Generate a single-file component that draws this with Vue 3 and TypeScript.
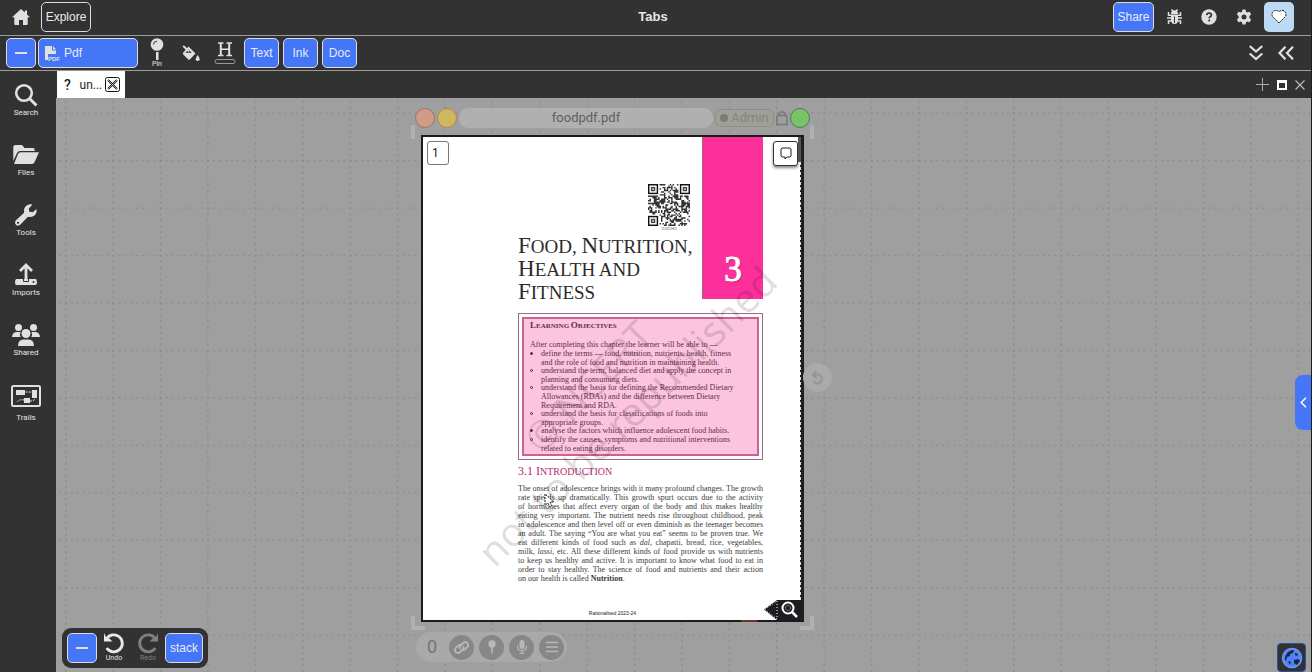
<script setup lang="ts">
interface Objective { lines: string[]; solid: boolean }

const objectives: Objective[] = [
  { solid: true, lines: ['define the terms — food, nutrition, nutrients, health, fitness', 'and the role of food and nutrition in maintaining health.'] },
  { solid: false, lines: ['understand the term, balanced diet and apply the concept in', 'planning and consuming diets.'] },
  { solid: false, lines: ['understand the basis for defining the Recommended Dietary', 'Allowances (RDAs) and the difference between Dietary', 'Requirement and RDA.'] },
  { solid: false, lines: ['understand the basis for classifications of foods into', 'appropriate groups.'] },
  { solid: true, lines: ['analyse the factors which influence adolescent food habits.'] },
  { solid: false, lines: ['identify the causes, symptoms and nutritional interventions', 'related to eating disorders.'] },
]

const QR_SIZE = 29

function inFinder(x: number, y: number): boolean {
  return (x < 8 && y < 8) || (x > QR_SIZE - 9 && y < 8) || (x < 8 && y > QR_SIZE - 9)
}

function buildQr(): string {
  let seed = 71
  let d = ''
  for (let y = 0; y < QR_SIZE; y++) {
    for (let x = 0; x < QR_SIZE; x++) {
      seed = (seed * 1103515245 + 12345) % 2147483648
      if (!inFinder(x, y) && (seed >> 12) % 100 < 52) d += `M${x} ${y}h1v1h-1z`
    }
  }
  return d
}

const qrPath = buildQr()
const finders = [[0, 0], [22, 0], [0, 22]]
</script>

<template>
  <div class="app">
    <header class="topbar">
      <div class="group">
        <button class="icon-btn home" aria-label="Home">
          <svg width="18" height="16" viewBox="0 0 18 16"><path d="M9 0 0 8.200h2.300V15q0 1 1 1h3.700v-5h4v5h3.700q1 0 1-1V8.200H18L15 5.400V1.400h-2.200v2z" fill="#e0e0e0" /></svg>
        </button>
        <button class="btn outline">Explore</button>
      </div>
      <h1>Tabs</h1>
      <div class="group right">
        <button class="btn">Share</button>
        <button class="icon-btn bug" aria-label="Report a bug">
          <svg width="15" height="16" viewBox="0 0 15 16" fill="none" stroke="#e0e0e0" stroke-width="1.500"><path d="M4 6.500h7V11a3.500 4 0 0 1-7 0z" fill="#e0e0e0" stroke="none" /><path d="M4 5a3.500 3.800 0 0 1 7 0z" fill="#e0e0e0" stroke="none" /><path d="M4.500.5 6 2.500M10.500.5 9 2.500M0 9h4M11 9h4M1.500 3v3.300H4M13.500 3v3.300H11M1.500 15v-3H4M13.500 15v-3H11M3 6.200h9" /><path d="M7.500 7.500V14" stroke="#323232" stroke-width="1" /></svg>
        </button>
        <button class="icon-btn" aria-label="Help">
          <svg width="16" height="16" viewBox="0 0 16 16"><circle cx="8" cy="8" r="7.700" fill="#e0e0e0" /><path d="M5.700 6.100Q6 4 8.100 4q2.300.1 2.300 2 0 1.100-1.200 1.700-1 .5-1 1.500M8.200 10.600v1.800" fill="none" stroke="#323232" stroke-width="1.700" /></svg>
        </button>
        <button class="icon-btn" aria-label="Settings">
          <svg width="16" height="16" viewBox="0 0 16 16"><path d="M6.500.5h3l.5 2.300 1.400.8 2.200-.8 1.500 2.700-1.700 1.600v1.800l1.700 1.600-1.500 2.700-2.200-.8-1.400.8-.5 2.300h-3L6 13.200l-1.400-.8-2.200.8L.9 10.500l1.700-1.600V7.100L.9 5.500l1.500-2.700 2.200.8L6 2.800z" fill="#e0e0e0" /><circle cx="8" cy="8" r="2.500" fill="#323232" /></svg>
        </button>
        <button class="avatar" aria-label="Favourite">
          <svg width="16" height="15" viewBox="0 0 16 15"><path d="M8 14 1.800 7.700C-.8 4 3.500-1 8 2.700c4.500-3.700 8.800 1.300 6.200 5z" fill="#fff" stroke="#111" stroke-width="1" stroke-dasharray="2 1" /></svg>
        </button>
      </div>
    </header>

    <div class="toolbar">
      <div class="group tools">
        <button class="btn dash" aria-label="Collapse menu"><i></i></button>
        <button class="btn pdf">
          <svg width="16" height="16" viewBox="0 0 16 16"><path d="M1 1h7v4.500h4V9H4v6H2q-1 0-1-1zM9 1l3 3.500H9z" fill="#e0e0e0" /><text x="4" y="15.500" font-size="6" font-weight="700" font-family="Liberation Sans" fill="#e0e0e0">PDF</text></svg>
          <span>Pdf</span>
        </button>
        <button class="tool pin">
          <svg width="14" height="22" viewBox="0 0 14 22"><circle cx="7" cy="6.500" r="6.300" fill="#e0e0e0" /><path d="M3.500 6.500q0-3.200 3.500-3.300" fill="none" stroke="#323232" /><path d="M6 14h2.500v8H6z" fill="#e0e0e0" /></svg>
          <span>Pin</span>
        </button>
        <button class="tool" aria-label="Fill">
          <svg width="18" height="16" viewBox="0 0 18 16"><path d="M1.200.8 7 6.600" stroke="#e0e0e0" stroke-width="1.800" /><path d="m6.500 1.500 7 7-5.500 5.800q-1 1-2 0L1.300 9.500q-1-1 0-2z" fill="#e0e0e0" /><path d="m3.300 7.800 3.200-3.300 3.300 3.300z" fill="#323232" /><path d="M2 1.500 7 6.600" stroke="#e0e0e0" stroke-width="1.500" /><path d="M15.700 10q4 5.500 0 6-4-.5 0-6z" fill="#e0e0e0" /></svg>
        </button>
        <button class="tool highlight" aria-label="Highlight">
          <svg width="22" height="22" viewBox="0 0 22 22" fill="none" stroke="#e0e0e0"><path d="M4 1h5.500M12.500 1H18M4 13.500h5.500M12.500 13.500H18M7 7.200h8" stroke-width="1.500" /><path d="M6.800 1v12.500M15.200 1v12.500" stroke-width="2" /><rect x="1" y="17.500" width="20" height="4" rx="2" stroke="#999" /></svg>
        </button>
        <button class="btn mode">Text</button>
        <button class="btn mode">Ink</button>
        <button class="btn mode">Doc</button>
      </div>
      <div class="group chevrons">
        <button class="icon-btn" aria-label="More">
          <svg width="14" height="16" viewBox="0 0 14 16" fill="none" stroke="#e0e0e0" stroke-width="2.200"><path d="m.7 1 6.300 5.500L13.300 1M.7 8.500 7 14l6.300-5.500" /></svg>
        </button>
        <button class="icon-btn" aria-label="Hide toolbar">
          <svg width="16" height="14" viewBox="0 0 16 14" fill="none" stroke="#e0e0e0" stroke-width="2.200"><path d="M7.500.7 1.500 7l6 6.300M15 .7 9 7l6 6.300" /></svg>
        </button>
      </div>
    </div>

    <div class="body">
      <nav class="sidebar">
        <button>
          <svg width="24" height="24" viewBox="0 0 24 24" fill="none" stroke="#e0e0e0"><circle cx="10" cy="10" r="7.800" stroke-width="2.600" /><path d="m15.500 15.500 7 7" stroke-width="3" /></svg>
          <span>Search</span>
        </button>
        <button>
          <svg width="26" height="24" viewBox="0 0 26 24" fill="#e0e0e0"><path d="M.3 18V4q0-2 2-2H9l2.500 3H20q1.700 0 1.700 1.700V8H7Q5 8 4 10z" /><path d="M5 11q.8-1.700 2.500-1.700H26l-4.500 10q-.7 1.700-2.500 1.700H1z" /></svg>
          <span>Files</span>
        </button>
        <button>
          <svg width="24" height="24" viewBox="0 0 24 24"><path d="M22.500 6q.8 4.500-2.800 7-2.700 1.700-5.700.8l-7.800 8Q3.800 23.500 2 21.700t-.3-4.200l8.400-7.700Q9.200 4.600 12.800 2.400 15.800.6 18.500 1.600l-3.700 3.800.5 3.300 3.400.6z" fill="#e0e0e0" /><circle cx="4" cy="19.800" r="1.100" fill="#323232" /></svg>
          <span>Tools</span>
        </button>
        <button>
          <svg width="24" height="24" viewBox="0 0 24 24"><path d="M2 16h20q1 1.500 1 3.500T21.500 22h-19Q1 22 1 19.500T2 16z" fill="#e0e0e0" /><path d="M12 18V3M6 8l6-6 6 6" fill="none" stroke="#e0e0e0" stroke-width="2.800" /><path d="M9.500 12v6.500h5V12" fill="none" stroke="#323232" /><circle cx="19.500" cy="19" r="1" fill="#323232" /></svg>
          <span>Imports</span>
        </button>
        <button>
          <svg width="28" height="24" viewBox="0 0 28 24" fill="#e0e0e0"><circle cx="6.500" cy="4.500" r="3.500" /><circle cx="21.500" cy="4.500" r="3.500" /><circle cx="14" cy="10.500" r="4.500" /><path d="M0 14q.5-5 5-5h3.500q-1.200 2.500.2 5zM28 14q-.5-5-5-5h-3.500q1.200 2.500-.2 5zM6 23q0-6.500 5.500-6.500h5Q22 16.500 22 23z" /></svg>
          <span>Shared</span>
        </button>
        <button>
          <svg width="30" height="24" viewBox="0 0 30 24" fill="#e0e0e0"><rect x="1" y="1" width="28" height="20" rx="1.500" fill="none" stroke="#e0e0e0" stroke-width="2" /><path d="M5 5h9v5H5zM21 5h5v8h-5zM13 13h6v5h-6z" /><path d="M14.500 7H21M6 17q2-3 7-2M19 16q4 0 5-2" fill="none" stroke="#e0e0e0" stroke-dasharray="2 1" /></svg>
          <span class="low">Trails</span>
        </button>
      </nav>

      <main>
        <div class="tabs">
          <div class="tab">
            <b>?</b><span>un...</span>
            <button aria-label="Close tab"><svg width="15" height="15" viewBox="0 0 15 15" fill="none" stroke="#111"><rect x=".5" y=".5" width="14" height="14" rx="2" /><path d="m3 3 9 9m0-9-9 9" stroke-width="2" /><path d="m3 3 9 9m0-9-9 9" stroke="#fff" stroke-width=".6" /></svg></button>
          </div>
          <div class="win">
            <button aria-label="Add tab"><svg width="13" height="13" viewBox="0 0 13 13"><path d="M6.500 0v13M0 6.500h13" stroke="#aaa" /></svg></button>
            <button aria-label="Maximize"><svg width="10" height="10" viewBox="0 0 10 10"><path d="M0 0h10v10H0zM2 3v5h6V3z" fill="#fff" fill-rule="evenodd" /></svg></button>
            <button aria-label="Close"><svg width="10" height="10" viewBox="0 0 10 10"><path d="m.5.5 9 9m0-9-9 9" stroke="#bbb" stroke-width="1.200" /></svg></button>
          </div>
        </div>

        <section class="canvas">
          <svg class="grid" width="100%" height="100%" aria-hidden="true">
            <defs>
              <pattern id="cell" x="9" y="14.600" width="47.400" height="47.440" patternUnits="userSpaceOnUse">
                <path d="M.8 0v48M0 .8h48" stroke="#868686" stroke-width="1.100" stroke-dasharray="2 3.930" />
              </pattern>
            </defs>
            <rect width="100%" height="100%" fill="url(#cell)" />
          </svg>

          <article class="doc">
            <div class="doc-head">
              <button class="dot red" aria-label="Close document"></button>
              <button class="dot yellow" aria-label="Minimize document"></button>
              <div class="doc-title">foodpdf.pdf</div>
              <div class="admin"><i></i>Admin</div>
              <svg width="12" height="15" viewBox="0 0 12 15" fill="none" stroke="#777" stroke-width="1.500"><path d="M1 5v8.500h10V5M3 5V3q0-2 3-2t3 2v2M1 4.500h10" /></svg>
              <button class="dot green" aria-label="Open document"></button>
            </div>

            <div class="page">
              <div class="hero">
                <div class="hero-text">
                  <div class="qr">
                    <svg width="42" height="42" viewBox="0 0 29 29">
                      <path :d="qrPath" fill="#333" />
                      <g v-for="(f, i) in finders" :key="i" :transform="`translate(${f[0]} ${f[1]})`">
                        <rect x=".5" y=".5" width="6" height="6" fill="none" stroke="#111" /><rect x="2.500" y="2.500" width="2" height="2" fill="none" stroke="#444" />
                      </g>
                    </svg>
                    <small>11116CH03</small>
                  </div>
                  <h2><span>F</span>ood, <span>N</span>utrition,<br><span>H</span>ealth and<br><span>F</span>itness</h2>
                </div>
                <div class="chapter">3</div>
              </div>

              <section class="objectives">
                <div class="inner">
                  <h3><span>L</span>earning <span>O</span>bjectives</h3>
                  <p>After completing this chapter the learner will be able to —</p>
                  <ul>
                    <li v-for="(o, i) in objectives" :key="i" :class="{ solid: o.solid }">
                      <span v-for="line in o.lines" :key="line">{{ line }}</span>
                    </li>
                  </ul>
                </div>
              </section>

              <h3 class="intro"><em>3.1 I</em>ntroduction</h3>
              <div class="prose">
                <span>The onset of adolescence brings with it many profound changes. The growth</span>
                <span>rate speeds up dramatically. This growth spurt occurs due to the activity</span>
                <span>of hormones that affect every organ of the body and this makes healthy</span>
                <span>eating very important. The nutrient needs rise throughout childhood, peak</span>
                <span>in adolescence and then level off or even diminish as the teenager becomes</span>
                <span>an adult. The saying “You are what you eat” seems to be proven true. We</span>
                <span>eat different kinds of food such as <i>dal</i>, chapatti, bread, rice, vegetables,</span>
                <span>milk, <i>lassi</i>, etc. All these different kinds of food provide us with nutrients</span>
                <span>to keep us healthy and active. It is important to know what food to eat in</span>
                <span>order to stay healthy. The science of food and nutrients and their action</span>
                <span class="last">on our health is called <b>Nutrition</b>.</span>
              </div>
              <footer>Rationalised 2023-24</footer>

              <svg class="watermark" viewBox="0 0 380 482" aria-hidden="true">
                <g font-family="Noto Sans" fill="#000" fill-opacity=".13">
                  <text font-size="40" transform="translate(72 432) rotate(-45)">not to be republished</text>
                  <text font-size="39" transform="translate(119 318) rotate(-46)">© NCERT</text>
                </g>
              </svg>
              <div class="page-no">1</div>
              <button class="comment" aria-label="Comment"><svg width="12" height="13" viewBox="0 0 12 13"><path d="M2 1h8l1 1v7l-1 1H7l-2 2V10H2L1 9V2z" fill="none" stroke="#222" /></svg></button>
              <div class="edge"></div>
              <div class="thumb"></div>
              <button class="lens" aria-label="Zoom"><svg width="38" height="20" viewBox="0 0 38 20"><path d="M0 9.500 13 0h25v20H13z" fill="#1c1d20" /><path d="M1 9.500 13 .8V19z" fill="none" stroke="#fff" stroke-dasharray="1 2" /><circle cx="24" cy="8" r="5.500" fill="none" stroke="#fff" stroke-width="2" /><circle cx="24" cy="8" r="2.500" fill="none" stroke="#ccc" stroke-dasharray="1 1" /><path d="m28 12 5 5" stroke="#fff" stroke-width="2.500" /></svg></button>
              <svg class="pointer" width="11" height="16" viewBox="0 0 11 16"><path d="M1 1v11l3-2 2 4 2-1-2-4h4z" fill="#fff" stroke="#111" stroke-dasharray="2 1" /></svg>
              <i class="mark"></i>
            </div>

            <div class="doc-tools">
              <span class="count">0</span>
              <button aria-label="Link"><svg width="17" height="17" viewBox="0 0 17 17" fill="none" stroke="#b8b8b8" stroke-width="1.800"><path d="M9.500 6q-3-1-5 1.200l-2 2q-1.500 2.300.3 4t4 0l3-3q1.200-1.500.3-3" /><path d="M7.500 11q3 1 5-1.200l2-2q1.500-2.300-.3-4t-4 0l-3 3q-1.200 1.500-.3 3" /></svg></button>
              <button aria-label="Pin"><svg width="10" height="14" viewBox="0 0 10 14" fill="#b8b8b8"><circle cx="5" cy="4" r="3.700" /><path d="M4.200 7h1.600v6.500H4.200z" /></svg></button>
              <button aria-label="Record"><svg width="12" height="14" viewBox="0 0 12 14"><rect x="3.500" width="5" height="9" rx="2.500" fill="#b8b8b8" /><path d="M1.500 5.500V7q0 3.500 4.500 3.500T10.500 7V5.500M6 10.500V13M3.500 13.300h5" fill="none" stroke="#b8b8b8" stroke-width="1.200" /></svg></button>
              <button aria-label="Menu"><svg width="12" height="12" viewBox="0 0 12 12"><path d="M0 1.500h12M0 6h12M0 10.500h12" stroke="#b8b8b8" stroke-width="1.600" /></svg></button>
            </div>

            <i class="corner tl"></i><i class="corner tr"></i><i class="corner bl"></i><i class="corner br"></i>
            <button class="rotate" aria-label="Rotate"><svg width="16" height="16" viewBox="0 0 16 16"><path d="M3 4.500h5.500a4.500 4.500 0 1 1-5 6.500M6.500 1 3 4.500 6.500 8" fill="none" stroke="#959595" stroke-width="2" /></svg></button>
          </article>

          <div class="history">
            <button class="btn dash" aria-label="Collapse"><i></i></button>
            <button class="hist"><svg width="22" height="21" viewBox="0 0 22 21"><path d="M3.500 6a8.500 8.500 0 1 1 .2 9" fill="none" stroke="#e8e8e8" stroke-width="2.800" /><path d="M1 0v8.500h8.500l-3-3L4 6z" fill="#e8e8e8" /></svg><span>Undo</span></button>
            <button class="hist off"><svg width="22" height="21" viewBox="0 0 22 21"><path d="M18.500 6a8.500 8.500 0 1 0-.2 9" fill="none" stroke="#808080" stroke-width="2.800" /><path d="M21 0v8.500h-8.500l3-3L18 6z" fill="#808080" /></svg><span>Redo</span></button>
            <button class="btn stack">stack</button>
          </div>

          <button class="drawer" aria-label="Open properties"><svg width="7" height="11" viewBox="0 0 7 11"><path d="M6 .8 1.200 5.500 6 10.200" fill="none" stroke="#fff" stroke-width="1.500" /></svg></button>
          <button class="globe" aria-label="Globe"><svg width="22" height="22" viewBox="0 0 22 22"><circle cx="11" cy="11" r="9.500" fill="#4f83f5" stroke="#6b9bf5" stroke-width="1.500" /><path d="M5 8q3-5 8-5l-1 3-3 1v2l-3 1-1 4q-2-2 0-6zM14 6l3 1-1 2-2-1zM13 13l4-1 2 2-3 4-3-2zM7 14l3 1-1 3z" fill="#1b2440" /></svg></button>
        </section>
      </main>
    </div>
  </div>
</template>

<style>
html, body { margin: 0; background: #1e1e1e; }
</style>

<style scoped>
* { box-sizing: border-box; }
.app { min-height: 100vh; display: flex; flex-direction: column; margin-right: 1px; background: #323232; color: #e6e6e6; font: 12px/16px "Liberation Sans", Arial, sans-serif; overflow: hidden; }
button { border: 0; padding: 0; margin: 0; background: none; color: inherit; font: inherit; flex: none; }
svg { display: block; }
.group { display: flex; align-items: center; }
.topbar { display: grid; grid-template-columns: 1fr auto 1fr; align-items: center; height: 36px; padding: 0 17px 2px 12px; border-bottom: 1px solid #9c9c9c; }
.home { margin-right: 11px; }
h1 { margin: 0; font-size: 13px; font-weight: 700; }
.right { justify-content: flex-end; gap: 19px; }
.right .btn { width: 41px; margin-right: -6px; }
.btn { height: 30px; border: 1px solid #dcdcdc; border-radius: 5px; background: #4476f7; color: #e8ecf8; font-size: 12px; }
.outline { width: 50px; background: #323232; }
.avatar { width: 30px; height: 30px; margin-left: -7px; border-radius: 5px; background: #bddaf5; display: grid; place-items: center; }
.toolbar { display: flex; justify-content: space-between; height: 35px; padding: 0 17px 0 6px; border-bottom: 1px solid #9c9c9c; }
.dash { width: 30px; display: grid; place-items: center; }
.dash i { width: 12px; height: 2px; background: #e0e0e0; }
.pdf { width: 100px; margin-left: 2px; padding-left: 5px; display: flex; align-items: center; gap: 4px; }
.tool { width: 34px; height: 34px; display: grid; place-items: center; align-content: center; }
.pin { width: 38px; margin-right: -2px; }
.tool span, .hist span { font: 7px/9px Roboto, sans-serif; }
.sidebar span { margin-top: 1px; font: 8px/9px Roboto, sans-serif; }
.highlight { margin-right: 2px; }
.mode { width: 35px; margin-right: 4px; }
.chevrons { gap: 15px; }
.body { flex: 1; display: flex; }
.sidebar { width: 56px; flex: none; padding: 12px 4px 0 0; display: flex; flex-direction: column; align-items: center; }
.sidebar button { height: 60px; display: flex; flex-direction: column; align-items: center; }
.sidebar button:last-child { padding-top: 2px; }
.sidebar .low { margin-top: 4px; }
main { flex: 1; min-width: 0; display: flex; flex-direction: column; }
.tabs { height: 27px; display: flex; justify-content: space-between; padding: 0 6px 0 1px; }
.tab { width: 68px; padding: 0 5px 0 7px; display: flex; align-items: center; justify-content: space-between; background: #fff; color: #222; font: 12px/16px Roboto, sans-serif; }
.tab b { font-size: 14px; font-weight: 500; }
.tab span { margin-left: 6px; }
.win { display: flex; align-items: center; gap: 8px; }
.canvas { position: relative; flex: 1; background: #9f9f9f; overflow: hidden; }
.grid { position: absolute; inset: 0; }
.doc { position: absolute; left: 359px; top: 10px; width: 395px; }
.doc-head { display: flex; align-items: center; height: 20px; gap: 2px; }
.dot { width: 20px; height: 20px; border-radius: 50%; border: 1px solid #777; }
.red { background: #d19b85; border-color: #98756a; }
.yellow { background: #cdb85f; border-color: #b5825b; }
.green { background: #78c267; border-color: #537953; }
.doc-title { flex: 1; border-radius: 9px; background: #b0b0b0; color: #606060; text-align: center; font: 13px/20px Roboto, sans-serif; }
.admin { width: 59px; height: 18px; border: 1px solid #8e8e82; border-radius: 6px; background: #a0a09a; color: #858579; font: 13px/16px Roboto, sans-serif; display: flex; align-items: center; justify-content: center; gap: 3px; }
.admin i { width: 8px; height: 8px; border-radius: 50%; background: #7c7c76; }
.page { position: relative; width: 383px; margin: 7px 0 0 6px; border: 2px solid #1b1b1b; background: #fff; color: #4a3f44; font: 8px/9px "Liberation Serif", serif; padding: 0 39px 3px 95px; }
.hero { display: grid; grid-template: 162px / minmax(0, 1fr) 61px; }
.hero-text { padding-top: 47px; }
.qr { width: 42px; margin-left: 130px; text-align: center; }
.qr small { display: block; height: 9px; font: 3px/7px "Liberation Sans", sans-serif; color: #555; }
h2 { margin: 0; width: 190px; font: 19px/23px "Liberation Serif", serif; text-transform: uppercase; color: #2b2b2b; white-space: nowrap; }
h2 span { font-size: 23px; line-height: 1px; }
.chapter { background: #fd2f9b; color: #fff; text-align: center; padding-top: 113px; font: 35px/40px "Liberation Serif", serif; text-shadow: 1px 1px 1px #99265f; -webkit-text-stroke: 1px #fff; border-left: 1px solid #9c6480; }
.objectives { margin-top: 14px; border: 1px solid #9d6b82; padding: 3px; background: #fff; }
.inner { border: 2px solid #ca6395; background: #fdc4df; padding: 3px 6px 1px; height: 139px; color: #5c3047; white-space: nowrap; }
h3 { margin: 0; font: 700 8px/9px "Liberation Serif", serif; text-transform: uppercase; }
.inner h3 { font-size: 7px; }
h3 span { font-size: 9px; line-height: 1px; }
.inner p { margin: 9px 0 0; }
ul { margin: 0; padding: 0 0 0 11px; list-style: none; }
li { position: relative; margin-bottom: -1px; }
li:nth-child(5) { margin-bottom: 0; }
li span { display: block; }
li::before { content: ""; box-sizing: border-box; position: absolute; left: -11px; top: 3px; width: 3px; height: 3px; border: 1px solid #4a2438; border-radius: 50%; }
li.solid::before { background: #4a2438; }
.intro { margin-top: 4px; font: 10px/14px "Liberation Serif", serif; color: #b52770; }
.intro em { font-style: normal; font-size: 12px; }
.prose { margin-top: 5px; color: #3c3c3c; }
.prose span { display: block; white-space: nowrap; text-align: justify; text-align-last: justify; }
.prose .last { text-align-last: left; }
footer { margin-top: 26px; padding-right: 56px; text-align: center; font: 5px/8px "Liberation Sans", sans-serif; color: #222; }
.watermark { position: absolute; inset: 0; width: 100%; height: 100%; }
.page-no { position: absolute; left: 4px; top: 4px; width: 22px; height: 24px; padding-left: 4px; border: 1px solid #777; border-radius: 3px; background: #fff; color: #222; font: 12px/22px Roboto, sans-serif; }
.comment { position: absolute; right: 4px; top: 4px; width: 25px; height: 25px; border: 1px solid #333; border-radius: 3px; background: #fff; box-shadow: 0 2px 3px #888; display: grid; place-items: center; }
.edge { position: absolute; right: -1px; top: 0; bottom: 0; width: 3px; background: #222; border-left: 1px dashed #ddd; }
.thumb { position: absolute; right: 1px; top: 0; width: 3px; height: 25px; background: #555; }
.lens { position: absolute; right: 0; bottom: 0; }
.pointer { position: absolute; left: 121px; top: 356px; }
.mark { position: absolute; right: 45px; bottom: -2px; width: 16px; height: 2px; background: #6c3524; }
.doc-tools { width: 151px; height: 30px; margin: 10px 0 0 1px; border-radius: 15px; background: #a9a9a9; display: flex; align-items: center; gap: 5px; }
.doc-tools button { width: 25px; height: 25px; border-radius: 50%; background: #878787; display: grid; place-items: center; }
.count { width: 28px; text-align: center; padding-left: 4px; font: 18px/30px Roboto, sans-serif; color: #747474; }
.corner { position: absolute; width: 14px; height: 14px; border: 0 solid #b0b0b0; }
.tl { left: -4px; top: 17px; border-left-width: 4px; }
.tr { right: -4px; top: 17px; border-right-width: 4px; }
.bl { left: -4px; top: 508px; border-width: 0 0 4px 4px; }
.br { right: -4px; top: 508px; border-width: 0 4px 4px 0; }
.rotate { position: absolute; left: 388px; top: 255px; width: 29px; height: 29px; border-radius: 50%; background: #aaa; display: grid; place-items: center; }
.history { position: absolute; left: 6px; bottom: 4px; height: 40px; padding: 5px; border-radius: 9px; background: #323232; display: flex; align-items: center; }
.hist { width: 34px; display: grid; place-items: center; }
.off { color: #808080; }
.stack { width: 38px; }
.drawer { position: absolute; right: 0; top: 277px; width: 16px; height: 55px; border-radius: 8px 0 0 8px; background: #4476f7; display: grid; place-items: center; }
.globe { position: absolute; right: 5px; bottom: 0; width: 29px; height: 29px; border: 1px solid #2b50a8; border-radius: 4px; background: #323232; display: grid; place-items: center; }
</style>
